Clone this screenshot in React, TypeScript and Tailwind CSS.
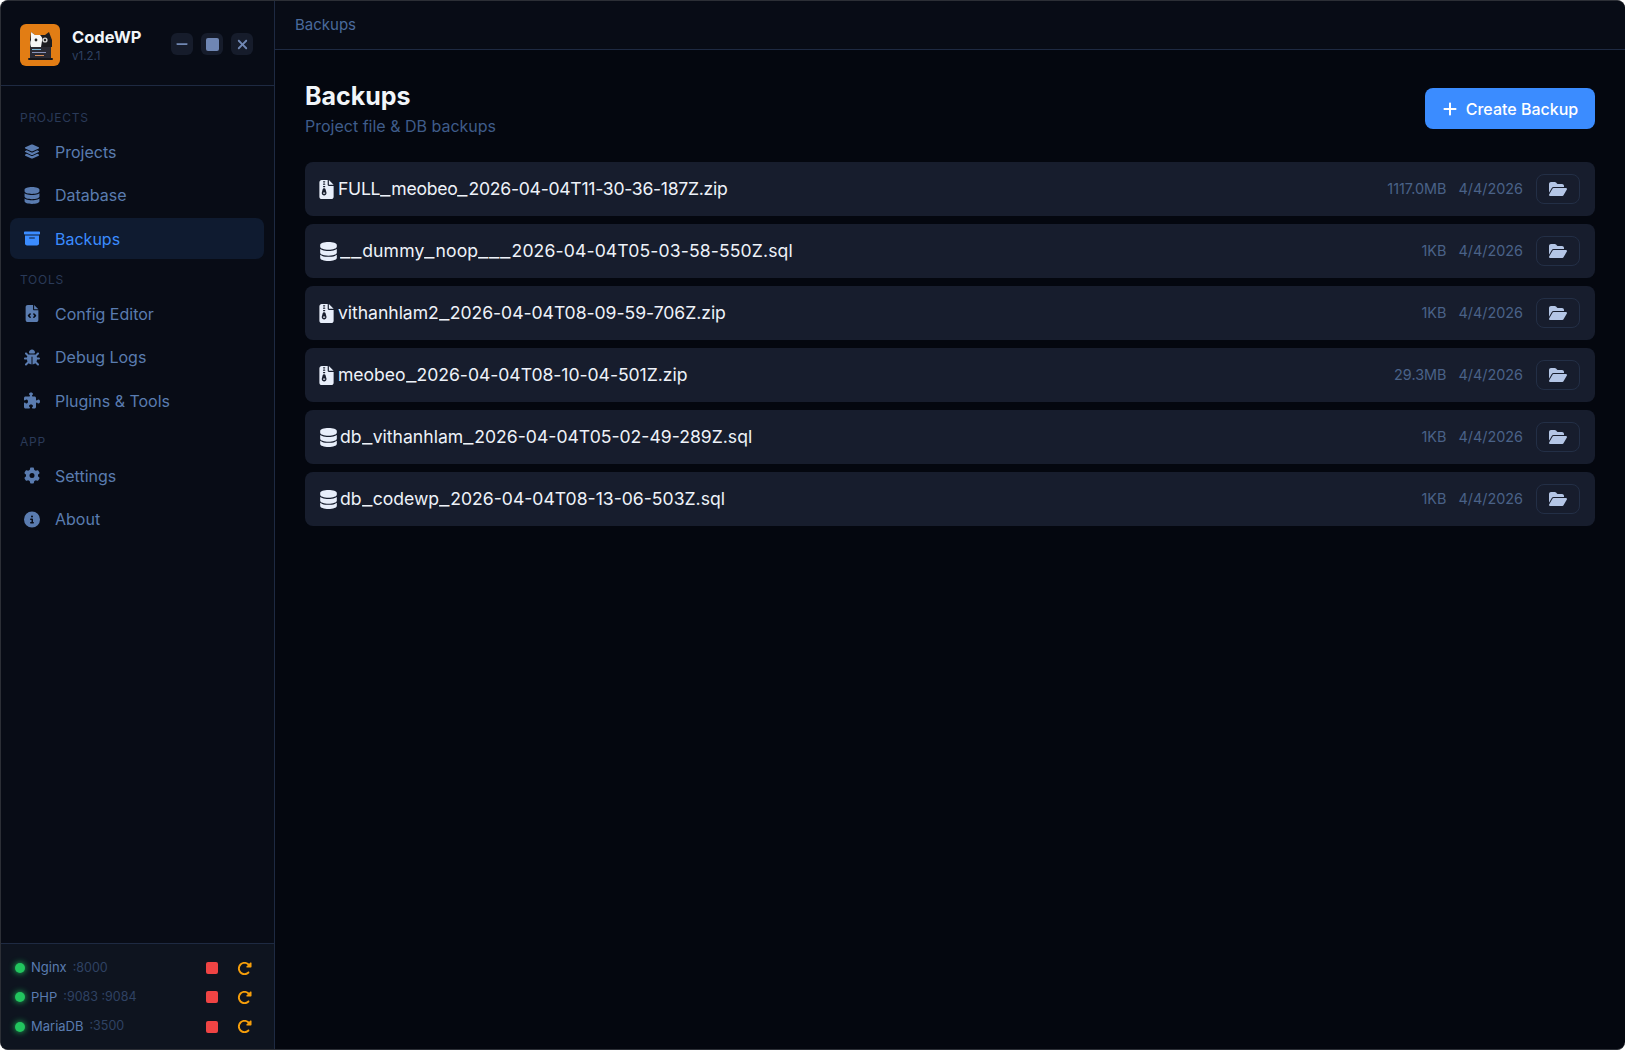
import React from 'react';
import {
  FaLayerGroup,
  FaDatabase,
  FaBoxArchive,
  FaFileCode,
  FaBug,
  FaPuzzlePiece,
  FaGear,
  FaCircleInfo,
  FaFileZipper,
  FaFolderOpen,
  FaPlus,
  FaRotateRight,
  FaMinus,
  FaXmark,
} from 'react-icons/fa6';

const navGroups = [
  {
    label: 'PROJECTS',
    items: [
      { name: 'Projects', icon: FaLayerGroup },
      { name: 'Database', icon: FaDatabase },
      { name: 'Backups', icon: FaBoxArchive, active: true },
    ],
  },
  {
    label: 'TOOLS',
    items: [
      { name: 'Config Editor', icon: FaFileCode },
      { name: 'Debug Logs', icon: FaBug },
      { name: 'Plugins & Tools', icon: FaPuzzlePiece },
    ],
  },
  {
    label: 'APP',
    items: [
      { name: 'Settings', icon: FaGear },
      { name: 'About', icon: FaCircleInfo },
    ],
  },
];

// tracking evens out the width difference of the fallback font per file name
const backups = [
  { name: 'FULL_meobeo_2026-04-04T11-30-36-187Z.zip', size: '1117.0MB', zip: true, tracking: 'tracking-[-0.28px]' },
  { name: '__dummy_noop___2026-04-04T05-03-58-550Z.sql', size: '1KB', zip: false, tracking: 'tracking-[0.12px]' },
  { name: 'vithanhlam2_2026-04-04T08-09-59-706Z.zip', size: '1KB', zip: true, tracking: 'tracking-[-0.05px]' },
  { name: 'meobeo_2026-04-04T08-10-04-501Z.zip', size: '29.3MB', zip: true, tracking: 'tracking-[-0.05px]' },
  { name: 'db_vithanhlam_2026-04-04T05-02-49-289Z.sql', size: '1KB', zip: false, tracking: 'tracking-normal' },
  { name: 'db_codewp_2026-04-04T08-13-06-503Z.sql', size: '1KB', zip: false, tracking: 'tracking-normal' },
];

const services = [
  { name: 'Nginx', ports: ':8000' },
  { name: 'PHP', ports: ':9083 :9084' },
  { name: 'MariaDB', ports: ':3500' },
];

const Logo = () => (
  <svg width="40" height="42" viewBox="0 0 40 42" className="shrink-0">
    <rect width="40" height="42" rx="6" fill="#e27d14" />
    <path d="M11 8l4 3h10l4-3 3 8v7H10v-7z" fill="#1c1c20" />
    <path d="M11 8l4 3h5c2 2 3 4 2 6l-1 6H11c-1-3-1-5 0-7z" fill="#f6f6f6" />
    <circle cx="16" cy="16" r="1.4" fill="#222" />
    <circle cx="25" cy="16" r="2.6" fill="#d5d5d5" />
    <circle cx="25" cy="16" r="1.2" fill="#222" />
    <rect x="10" y="23" width="21" height="11" fill="#2a2a33" />
    <rect x="12" y="25" width="9" height="1" fill="#7fb9d8" />
    <rect x="12" y="28" width="14" height="1" fill="#8a93b8" />
    <rect x="15" y="31" width="9" height="1" fill="#d88f5a" />
    <rect x="8" y="34" width="25" height="2" rx="1" fill="#17171b" />
  </svg>
);

const WinButton = ({ children }: { children: React.ReactNode }) => (
  <button className="w-[22px] h-[22px] rounded-md bg-[#161c2b] flex items-center justify-center text-[#7188b4]">
    {children}
  </button>
);

const Sidebar = () => (
  <aside className="w-[274px] shrink-0 h-full bg-[#080c16] border-r border-[#1e2a42] flex flex-col">
    <div className="h-[85px] shrink-0 border-b border-[#1e2a42] pl-[19px] pr-[21px] pt-1 flex items-center">
      <Logo />
      <div className="ml-3 flex-1 min-w-0">
        <div className="text-[16.5px] leading-[20px] font-bold text-[#f1f5f9]">CodeWP</div>
        <div className="text-[11.5px] leading-[16px] mt-[1px] text-[#2f4263]">v1.2.1</div>
      </div>
      <div className="flex gap-2 mb-[2px]">
        <WinButton><FaMinus size={14} /></WinButton>
        <WinButton><span className="block w-[13px] h-[13px] rounded-[2px] bg-[#6f86b3]" /></WinButton>
        <WinButton><FaXmark size={15} /></WinButton>
      </div>
    </div>
    <nav className="flex-1 pl-[9px] pr-[10px] pt-6">
      {navGroups.map((group) => (
        <div key={group.label} className="mb-[13px]">
          <div className="pl-[10px] text-[12px] leading-[16px] tracking-[0.06em] text-[#2a3a58] mb-[5px]">{group.label}</div>
          <div className="flex flex-col gap-[2.5px]">
            {group.items.map((item) => {
              const Icon = item.icon;
              return (
                <div
                  key={item.name}
                  className={`h-[41px] rounded-lg pl-[14px] flex items-center gap-[15px] text-[16px] ${
                    item.active ? 'bg-[#0f1b30] text-[#3b8cff]' : 'text-[#5a7cb0]'
                  }`}
                >
                  <span className="w-4 flex justify-center"><Icon size={17} /></span>
                  <span>{item.name}</span>
                </div>
              );
            })}
          </div>
        </div>
      ))}
    </nav>
    <div className="h-[106px] shrink-0 border-t border-[#1e2a42] bg-[#0e141f] pl-[14px] pr-[22px] pt-[14px] flex flex-col gap-[9.25px]">
      {services.map((s) => (
        <div key={s.name} className="h-5 flex items-center text-[13px]">
          <span className="w-[10px] h-[10px] rounded-full bg-[#22c55e] shadow-[0_0_6px_#22c55e] mr-[6px]" />
          <span className="text-[#5a7cb0]">{s.name}</span>
          <span className="ml-[6px] text-[12.5px] text-[#2f4263]">{s.ports}</span>
          <span className="ml-auto w-3 h-3 rounded-[2px] bg-[#ef4444]" />
          <FaRotateRight size={15} className="ml-[19px] text-[#f59e0b]" />
        </div>
      ))}
    </div>
  </aside>
);

const BackupRow = ({ name, size, zip, tracking }: { name: string; size: string; zip: boolean; tracking: string }) => (
  <div className="h-[54px] rounded-lg bg-[#171d2d] px-[15px] flex items-center">
    {zip ? (
      <FaFileZipper size={19} className="text-[#e8eefa] -ml-[3px] mr-[2px] shrink-0" />
    ) : (
      <FaDatabase size={19} className="text-[#e8eefa] -ml-[1px] mr-[2px] shrink-0" />
    )}
    <span className={`text-[17.6px] text-[#eef2f9] ${tracking}`}>
      {name.split(/(_)/).map((part, i) =>
        part === '_' ? (
          <span key={i} className="inline-block w-[11.1px] origin-left scale-x-[1.3]">_</span>
        ) : (
          part
        )
      )}
    </span>
    <span className="ml-auto text-[14.4px] text-[#4a6288]">{size}</span>
    <span className="ml-3 text-[14.4px] text-[#4a6288]">4/4/2026</span>
    <button className="ml-[13px] w-11 h-[30px] rounded-lg border border-[#232f46] flex items-center justify-center text-[#b4c6e6]">
      <FaFolderOpen size={18} />
    </button>
  </div>
);

export default function App() {
  return (
    <div className="relative w-[1625px] h-[1050px] flex overflow-hidden bg-[#04070f] rounded-[8px] border-t border-l border-b border-[#2c2f36] font-['Inter',sans-serif]">
      <Sidebar />
      <main className="flex-1 min-w-0 flex flex-col">
        <header className="h-[49px] shrink-0 bg-[#080c16] border-b border-[#1e2a42] pl-5 pt-[1px] flex items-center text-[15px] text-[#4a6a9c]">
          Backups
        </header>
        <div className="px-[30px] pt-[29px]">
          <div className="flex items-start justify-between mb-[24px]">
            <div>
              <h1 className="text-[25px] leading-[34px] font-bold text-[#f1f5f9]">Backups</h1>
              <p className="text-[16px] leading-[24px] mt-[1px] text-[#3f5c8a]">Project file &amp; DB backups</p>
            </div>
            <button className="mt-[9px] w-[170px] h-[41px] rounded-lg bg-[#3b8cff] text-white text-[16px] font-medium flex items-center justify-center gap-2">
              <FaPlus size={16} />
              Create Backup
            </button>
          </div>
          <div className="flex flex-col gap-2">
            {backups.map((b) => (
              <BackupRow key={b.name} {...b} />
            ))}
          </div>
        </div>
      </main>
    </div>
  );
}
